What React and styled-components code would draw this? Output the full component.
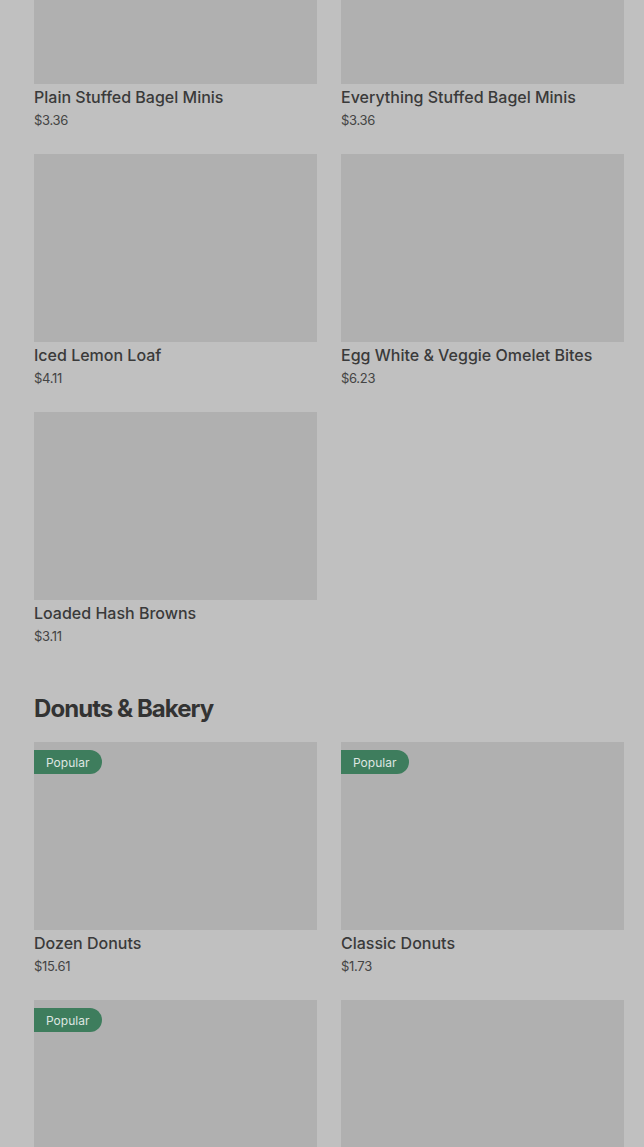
import React from 'react'
import styled, { createGlobalStyle } from 'styled-components'

const GlobalStyle = createGlobalStyle`
  html, body {
    margin: 0;
    padding: 0;
    background: #c0c0c0;
    font-family: Inter, "Noto Sans", sans-serif;
    overflow: hidden;
  }
`

const sections = [
  {
    title: null,
    items: [
      { name: 'Plain Stuffed Bagel Minis', price: '$3.36' },
      { name: 'Everything Stuffed Bagel Minis', price: '$3.36' },
      { name: 'Iced Lemon Loaf', price: '$4.11' },
      { name: 'Egg White & Veggie Omelet Bites', price: '$6.23' },
      { name: 'Loaded Hash Browns', price: '$3.11' },
    ],
  },
  {
    title: 'Donuts & Bakery',
    items: [
      { name: 'Dozen Donuts', price: '$15.61', popular: true },
      { name: 'Classic Donuts', price: '$1.73', popular: true },
      { name: 'Munchkins Donut Hole Treats', price: '$5.49', popular: true },
      { name: 'Bakery Muffins', price: '$3.20' },
    ],
  },
]

export default function App() {
  return (
    <>
      <GlobalStyle />
      <Page>
        {sections.map((section, i) => (
          <Section key={i}>
            {section.title && <SectionTitle>{section.title}</SectionTitle>}
            <Grid>
              {section.items.map((item) => (
                <Card key={item.name}>
                  <Thumb>
                    {item.popular && <Badge>Popular</Badge>}
                  </Thumb>
                  <Name>{item.name}</Name>
                  <Price>{item.price}</Price>
                </Card>
              ))}
            </Grid>
          </Section>
        ))}
      </Page>
    </>
  )
}

const Page = styled.div`
  padding: 0 20px 0 34px;
  margin-top: -104px;
  display: flex;
  flex-direction: column;
  gap: 47px;
`

const Section = styled.section`
  display: flex;
  flex-direction: column;
`

const SectionTitle = styled.h2`
  margin: 0 0 17px;
  font-size: 24px;
  line-height: 32px;
  font-weight: 700;
  letter-spacing: -0.95px;
  color: #333333;
`

const Grid = styled.div`
  display: grid;
  grid-template-columns: repeat(2, 1fr);
  column-gap: 24px;
  row-gap: 24px;
`

const Card = styled.div`
  display: flex;
  flex-direction: column;
`

const Thumb = styled.div`
  position: relative;
  height: 188px;
  background: #b0b0b0;
`

const Badge = styled.span`
  position: absolute;
  top: 8px;
  left: 0;
  height: 24px;
  padding: 0 13px 0 12px;
  display: flex;
  align-items: center;
  border-radius: 0 12px 12px 0;
  background: #3e7d5d;
  color: #dfe6e1;
  font-size: 12px;
  font-weight: 400;
`

const Name = styled.div`
  margin-top: 2px;
  font-size: 16px;
  line-height: 22px;
  font-weight: 500;
  color: #3a3a3a;
`

const Price = styled.div`
  margin-top: 2px;
  font-size: 13px;
  line-height: 20px;
  color: #444444;
  letter-spacing: -0.3px;
`
